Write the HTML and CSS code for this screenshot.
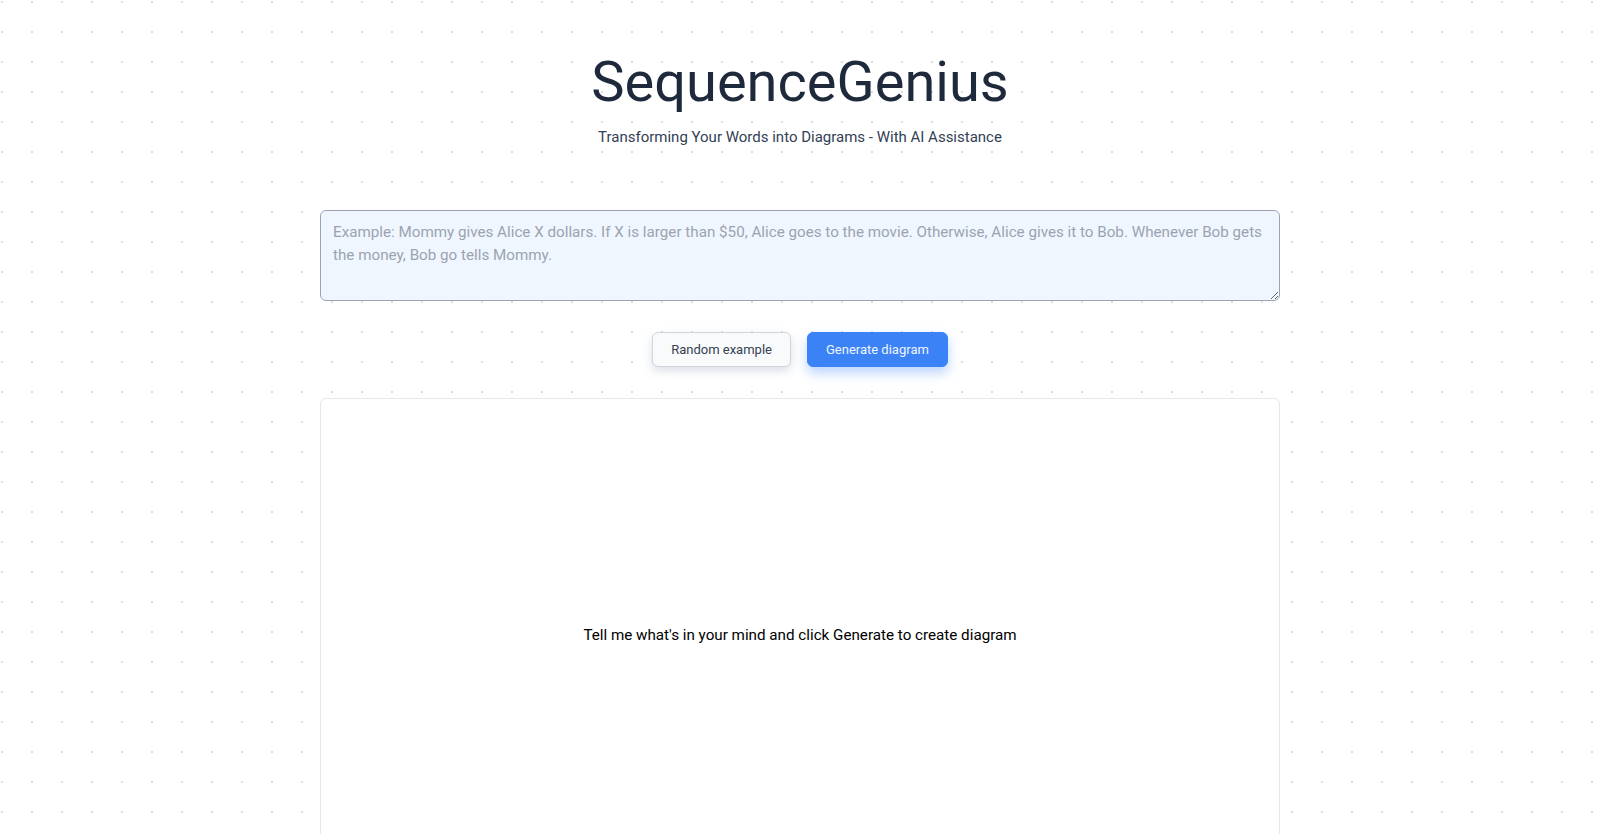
FILE: index.html
```html
<!DOCTYPE html>
<html lang="en">
<head>
<meta charset="utf-8">
<title>SequenceGenius</title>
<link rel="stylesheet" href="styles.css">
</head>
<body>
<main class="page">
  <header class="hero">
    <h1 class="title">SequenceGenius</h1>
    <p class="subtitle">Transforming Your Words into Diagrams - With AI Assistance</p>
  </header>
  <section class="input-area">
    <textarea class="prompt" placeholder="Example: Mommy gives Alice X dollars. If X is larger than $50, Alice goes to the movie. Otherwise, Alice gives it to Bob. Whenever Bob gets the money, Bob go tells Mommy."></textarea>
    <div class="actions">
      <button class="btn btn-secondary" type="button">Random example</button>
      <button class="btn btn-primary" type="button">Generate diagram</button>
    </div>
  </section>
  <section class="diagram">
    <p class="diagram-empty">Tell me what's in your mind and click Generate to create diagram</p>
  </section>
</main>
</body>
</html>
```

FILE: styles.css
```css
* { box-sizing: border-box; }
html, body { margin: 0; padding: 0; }
body {
  font-family: Roboto, "Liberation Sans", Arial, sans-serif;
  background-color: #ffffff;
  background-image: radial-gradient(circle at 2px 2px, #dcdce0 1px, transparent 1.2px);
  background-size: 30px 30px;
  min-height: 834px;
  color: #111827;
}
.page {
  display: flex;
  flex-direction: column;
  align-items: center;
  padding-top: 50px;
}
.hero { text-align: center; }
.title {
  margin: 0;
  font-size: 56px;
  font-weight: 400;
  line-height: 64px;
  color: #1e293b;
}
.subtitle {
  margin: 12px 0 0;
  font-size: 15px;
  line-height: 22px;
  color: #334155;
}
.input-area {
  margin-top: 62px;
  width: 960px;
  display: flex;
  flex-direction: column;
  align-items: center;
}
.prompt {
  display: block;
  width: 960px;
  height: 91px;
  padding: 10px 12px;
  border: 1px solid #9ca3af;
  border-radius: 6px;
  background: #eff6ff;
  font-family: inherit;
  font-size: 15.2px;
  line-height: 23px;
  color: #1f2937;
  resize: vertical;
}
.prompt::placeholder { color: #9ca3af; }
.actions {
  margin-top: 31px;
  display: flex;
  gap: 16px;
}
.btn {
  height: 35px;
  padding: 0 18px;
  border-radius: 6px;
  font-family: inherit;
  font-size: 13px;
  cursor: pointer;
}
.btn-secondary {
  background: #f8fafc;
  border: 1px solid #d1d5db;
  color: #374151;
  box-shadow: 0 4px 10px rgba(148, 163, 184, 0.35);
}
.btn-primary {
  background: #3b82f6;
  border: 1px solid #3b82f6;
  color: #eff6ff;
  box-shadow: 0 6px 12px rgba(59, 130, 246, 0.35);
}
.diagram {
  margin-top: 31px;
  width: 960px;
  height: 474px;
  border: 1px solid #e5e7eb;
  border-radius: 6px;
  background: #ffffff;
  display: flex;
  align-items: center;
  justify-content: center;
}
.diagram-empty {
  margin: 0;
  font-size: 15.2px;
  color: #000000;
}
```
